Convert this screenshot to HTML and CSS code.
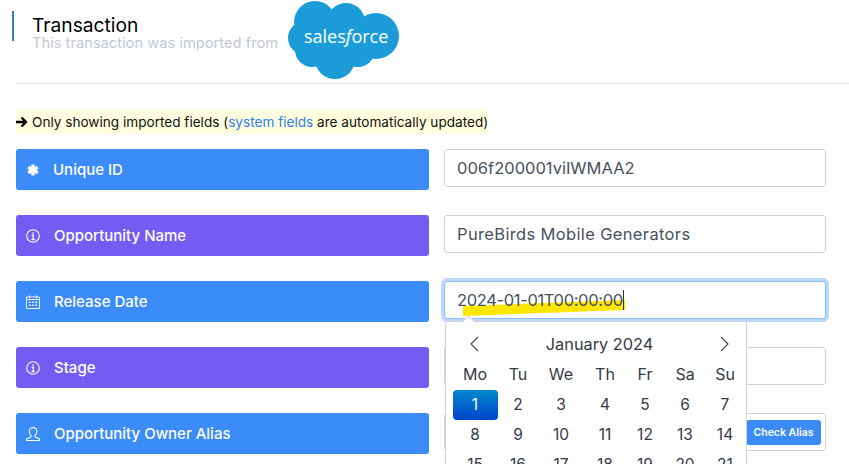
FILE: index.html
```html
<!DOCTYPE html>
<html lang="en">
<head>
<meta charset="utf-8">
<title>Transaction</title>
<link rel="stylesheet" href="styles.css">
</head>
<body>
<header class="head">
  <div class="head-text">
    <h1 class="title">Transaction</h1>
    <p class="subtitle">This transaction was imported from</p>
  </div>
  <svg class="sf-logo" viewBox="0 0 112 80" width="112" height="80" aria-label="salesforce">
    <g fill="#1b9cd9">
      <circle cx="27" cy="22" r="21"/>
      <circle cx="58" cy="22" r="19"/>
      <circle cx="88" cy="36" r="23"/>
      <circle cx="70" cy="50" r="17"/>
      <circle cx="47" cy="59" r="20"/>
      <circle cx="24" cy="50" r="17"/>
      <circle cx="17" cy="38" r="17"/>
      <circle cx="50" cy="38" r="24"/>
    </g>
    <text class="sf-text" x="16" y="43">sales<tspan class="sf-f">f</tspan>orce</text>
  </svg>
</header>
<hr class="rule">
<p class="note"><span class="note-in"><svg class="arrow" viewBox="0 0 12 12" width="12" height="12"><path d="M0 6h10M5.500 1.500 10 6l-4.500 4.500" fill="none" stroke="#000" stroke-width="2.400"/></svg>Only showing imported fields (<a class="link">system fields</a> are automatically updated)</span></p>
<main class="rows">
  <div class="row">
    <div class="label blue"><svg class="ic star" viewBox="0.500 0.500 13 13"><path d="M7 1v12M1.800 4l10.400 6M12.200 4 1.800 10" stroke="#fff" stroke-width="3.600" fill="none"/></svg><span>Unique ID</span></div>
    <div class="input">006f200001viIWMAA2</div>
  </div>
  <div class="row">
    <div class="label purple"><svg class="ic" viewBox="0 0 14 14"><circle cx="7" cy="7" r="6.300" fill="none" stroke="#fff" stroke-width="1.100"/><path d="M7 3.200v1.500M5.600 6.200H7.300V10.400M5.400 10.500h3.400" fill="none" stroke="#fff" stroke-width="1.300"/></svg><span>Opportunity Name</span></div>
    <div class="input wide">PureBirds Mobile Generators</div>
  </div>
  <div class="row">
    <div class="label blue"><svg class="ic" viewBox="0 0 14 14"><path d="M.5 2h13v11.500H.5zM.5 4.500h13M3.500.5v2.500M10.500.5v2.500" fill="none" stroke="#fff" stroke-width=".9"/><path d="M3 6.500h1.600v1.400H3zM6.200 6.500h1.600v1.400H6.200zM9.400 6.500H11v1.400H9.400zM3 9.500h1.600v1.400H3zM6.200 9.500h1.600v1.400H6.200zM9.400 9.500H11v1.400H9.400z" fill="#fff"/></svg><span>Release Date</span></div>
    <div class="input focus tight"><span class="hl-wrap">2024-01-01T00:00:00<svg class="hl" viewBox="0 0 162 16" width="162" height="16"><path d="M0 6 162 0v10L0 16z" fill="#ffe600"/></svg></span><i class="caret"></i></div>
  </div>
  <div class="row">
    <div class="label purple"><svg class="ic" viewBox="0 0 14 14"><circle cx="7" cy="7" r="6.300" fill="none" stroke="#fff" stroke-width="1.100"/><path d="M7 3.200v1.500M5.600 6.200H7.300V10.400M5.400 10.500h3.400" fill="none" stroke="#fff" stroke-width="1.300"/></svg><span>Stage</span></div>
    <div class="input"></div>
  </div>
  <div class="row">
    <div class="label blue"><svg class="ic" viewBox="0 0 14 14"><path d="M7 .6c2.400 0 3.700 1.800 3.700 4 0 1.700-.8 3.200-1.700 4v1.400l4.500 2v1.500H.5V12L5 10V8.600C4 7.800 3.300 6.300 3.300 4.600c0-2.200 1.300-4 3.700-4z" fill="none" stroke="#fff" stroke-width="1.100"/></svg><span>Opportunity Owner Alias</span></div>
    <div class="input alias"><button class="check">Check Alias</button></div>
  </div>
</main>
<section class="cal">
  <div class="cal-head">
    <svg class="chev" viewBox="0 0 10 16" width="10" height="16"><path d="M9 1 2 8l7 7" fill="none" stroke="#3a4150" stroke-width="1.100"/></svg>
    <span>January 2024</span>
    <svg class="chev" viewBox="0 0 10 16" width="10" height="16"><path d="m1 1 7 7-7 7" fill="none" stroke="#3a4150" stroke-width="1.100"/></svg>
  </div>
  <div class="grid">
    <b>Mo</b><b>Tu</b><b>We</b><b>Th</b><b>Fr</b><b>Sa</b><b>Su</b>
    <span class="sel">1</span><span>2</span><span>3</span><span>4</span><span>5</span><span>6</span><span>7</span>
    <span>8</span><span>9</span><span>10</span><span>11</span><span>12</span><span>13</span><span>14</span>
    <span>15</span><span>16</span><span>17</span><span>18</span><span>19</span><span>20</span><span>21</span>
  </div>
</section>
</body>
</html>
```
FILE: styles.css
```css
html,body{margin:0;height:464px;overflow:hidden;background:#fff}
body{position:relative;font-family:"Inter","Noto Sans",sans-serif;color:#343a47}
.head{display:flex;align-items:flex-start;height:83px;box-sizing:border-box;padding:0 0 0 12px}
.head-text{margin-top:11px;height:30px;border-left:2px solid #2f7ed8;padding-left:18px;width:246px}
.title{margin:4px 0 0;font-size:19.200px;line-height:20px;font-weight:400;color:#000}
.subtitle{margin:0;font-size:14.700px;line-height:17px;color:#c3cad6;white-space:nowrap}
.sf-logo{margin-left:10px}
.sf-text{font-family:"Open Sans",sans-serif;font-size:18px;fill:#fff}
.sf-f{font-style:italic}
.rule{margin:0 0 0 16px;border:0;border-top:1px solid #e4e6e9;width:833px}
.note{margin:26px 0 0 16px;font-size:13.600px;line-height:25px;height:24px;color:#111;white-space:nowrap}
.note-in{display:inline-block;height:24px;background:#ffffe0}
.arrow{margin-right:4px;vertical-align:-1px}
.link{color:#2f80ed}
.rows{display:flex;flex-direction:column;gap:25px;margin:15px 0 0 16px}
.row{display:flex;align-items:flex-start;gap:15px}
.label{width:413px;height:41px;box-sizing:border-box;border-radius:3px;display:flex;align-items:center;padding-left:10px;color:#fff;font-size:15px;font-weight:500}
.label span{margin-left:14px}
.blue{background:#3b8cf8}
.purple{background:#745cf3}
.ic{width:14px;height:14px;flex:none}
.star{width:12px;height:12px;margin:0 0 0 1px}
.input{width:382px;height:38px;box-sizing:border-box;border:1px solid #ced4de;border-radius:3px;background:#fff;padding:0 12px;display:flex;align-items:center;font-size:16.500px;color:#4a5160;position:relative;isolation:isolate}
.wide{letter-spacing:.35px}
.tight{letter-spacing:-.35px}
.focus{border-color:#8dbdf8;box-shadow:0 0 0 3px #bcd9fb}
.hl-wrap{position:relative;white-space:nowrap}
.hl{position:absolute;left:6px;top:10px;z-index:-1}
.caret{width:1px;height:20px;background:#333}
.alias{justify-content:flex-end;padding-right:4px}
.check{border:0;border-radius:3px;background:#3b8cf8;color:#fff;font:600 10.500px "Inter",sans-serif;height:25px;width:75px;padding:0}
.cal{position:absolute;left:445px;top:321px;width:302px;height:170px;box-sizing:border-box;background:#fff;border:1px solid #ced4de;border-radius:3px;padding:0 3px}
.cal::before{content:"";position:absolute;left:18px;top:-5px;width:8px;height:8px;background:#fff;border-left:1px solid #ced4de;border-top:1px solid #ced4de;transform:rotate(45deg)}
.cal-head{display:flex;justify-content:space-between;align-items:center;height:43px;padding:0 13px 0 20px;font-size:16.300px}
.grid{display:grid;grid-template-columns:45px 41px 45px 43px 37px 43px 37px;grid-auto-rows:30px;text-align:center;align-items:center;margin-top:-5px;margin-left:3.500px;font-size:15.500px}
.grid b{font-weight:400;font-size:16px;margin-top:-2px}
.grid span{height:30px;line-height:30px}
.sel{border-radius:4px;background:linear-gradient(#0088cc,#0044cc);color:#fff}
```
